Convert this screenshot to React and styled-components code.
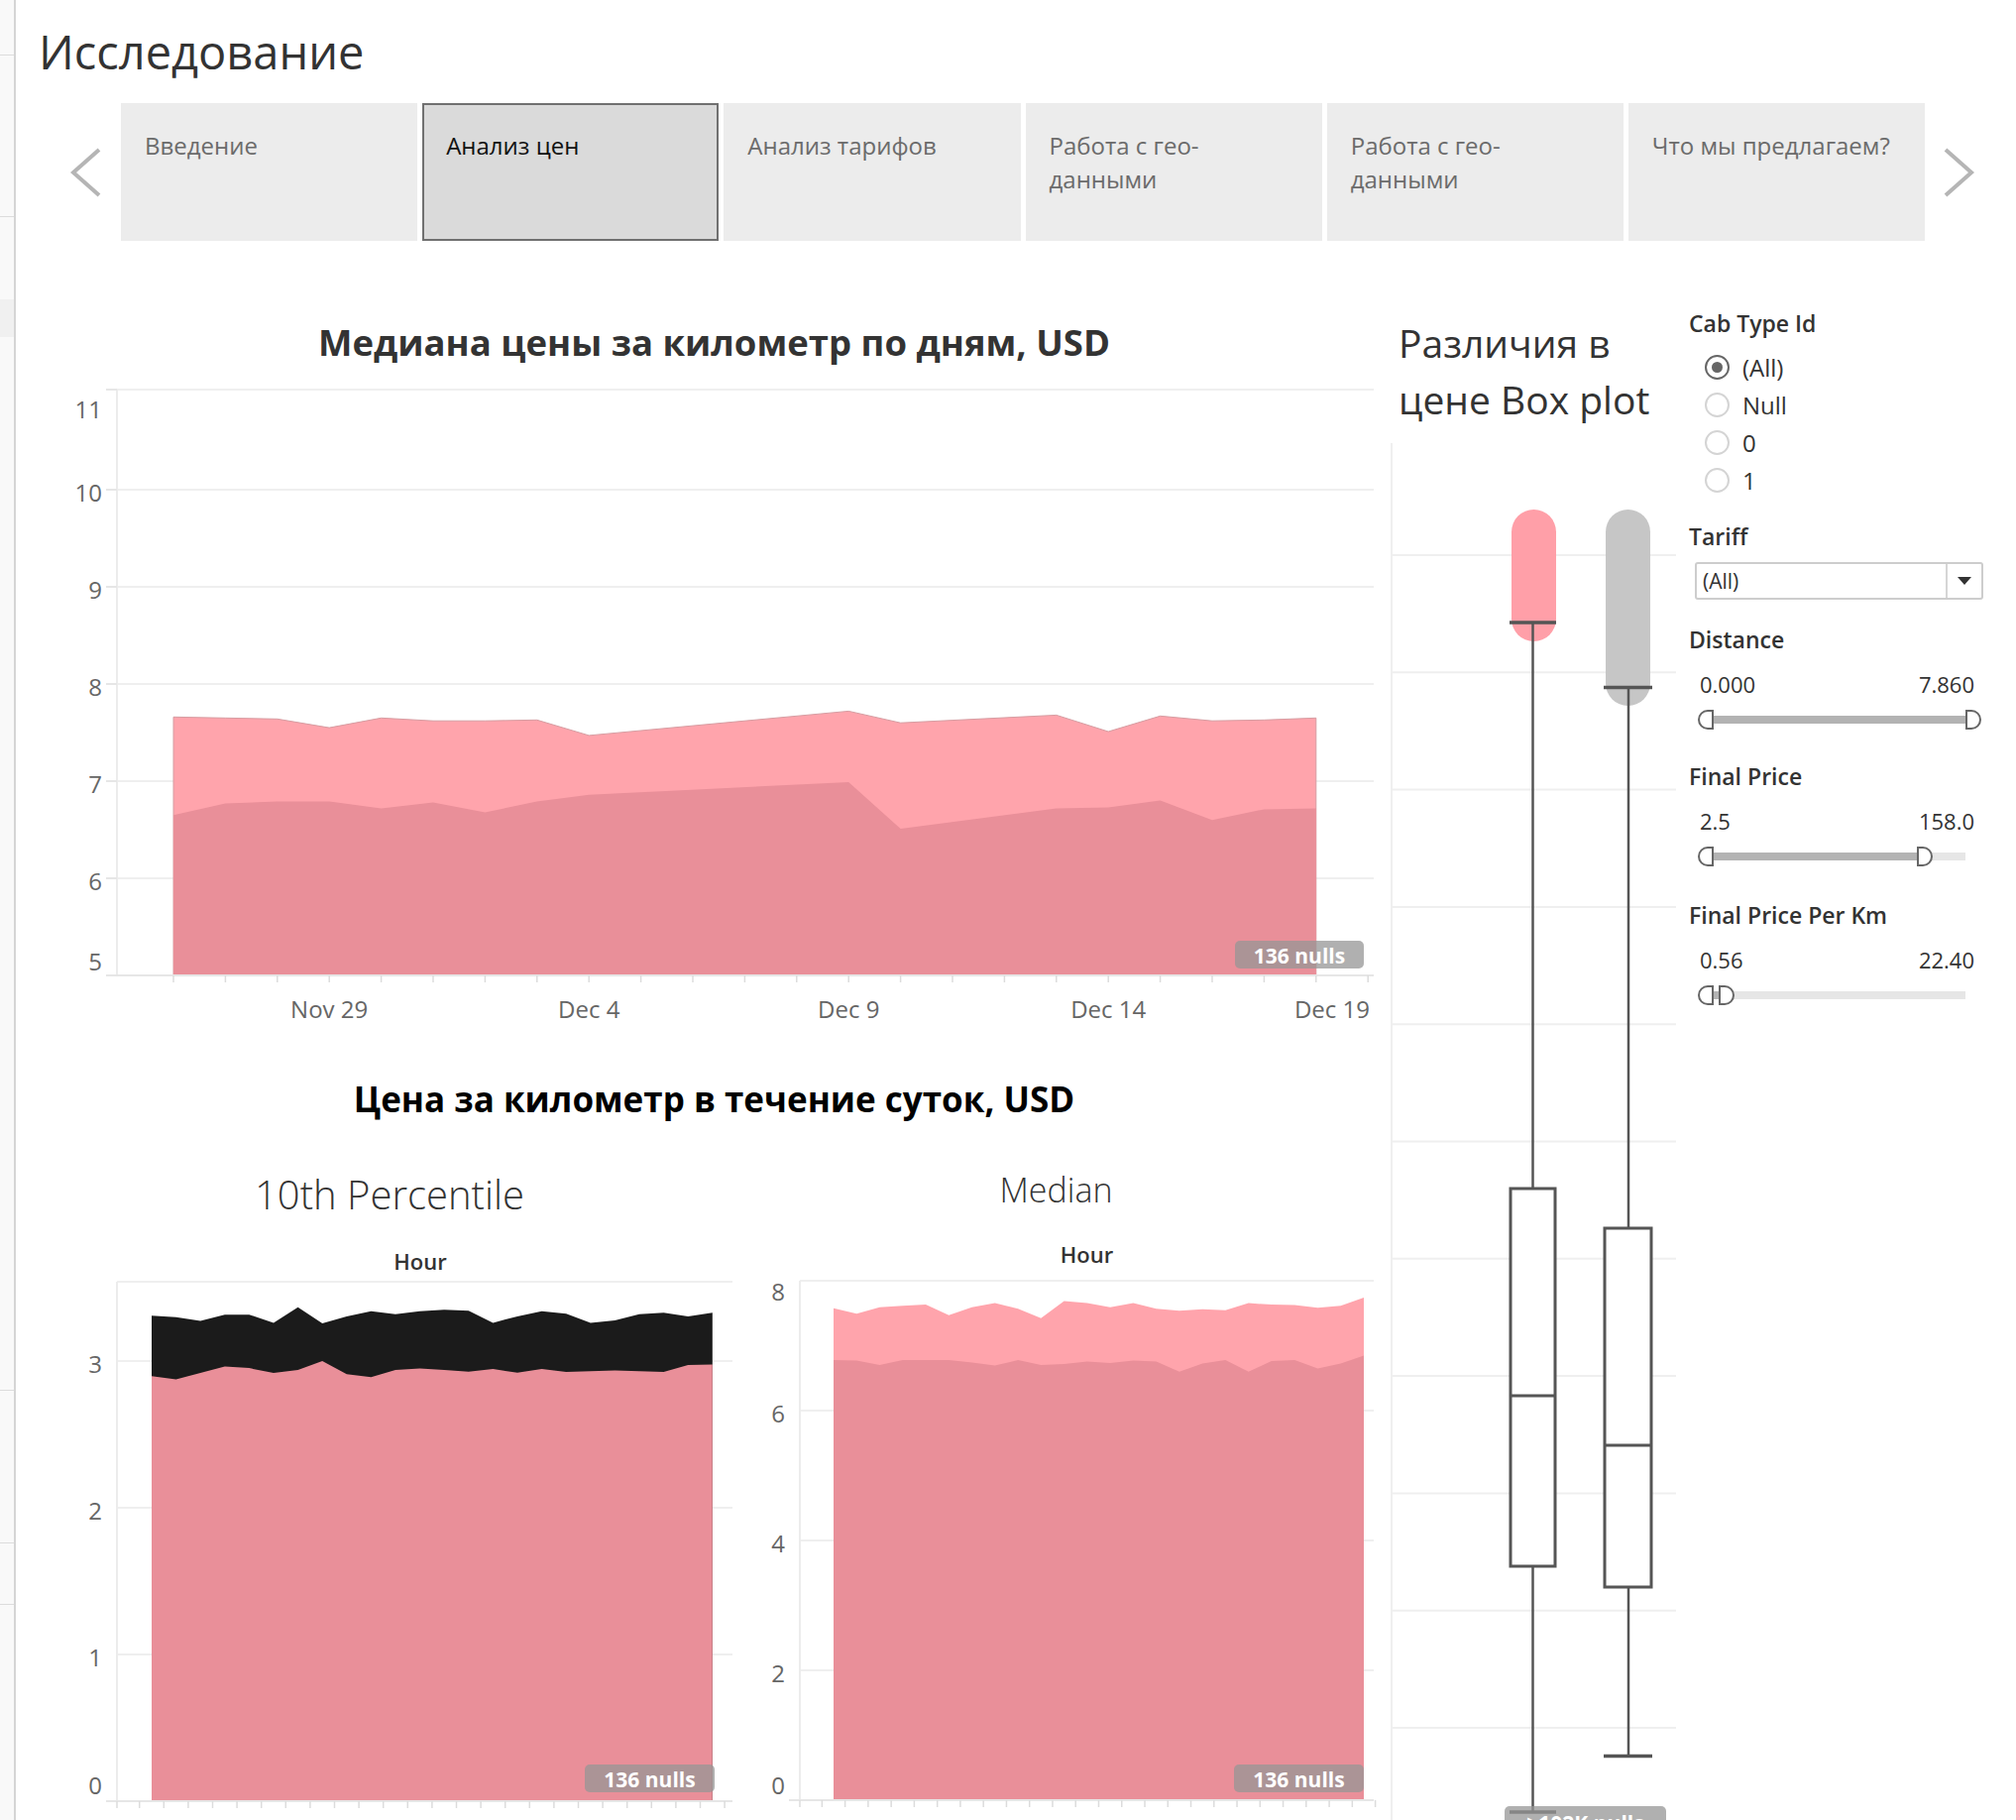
import React from "react";
import styled, { createGlobalStyle } from "styled-components";

const FONT = `"Open Sans", "Noto Sans", "Liberation Sans", sans-serif`;

const GlobalStyle = createGlobalStyle`
  html, body {
    margin: 0;
    padding: 0;
    overflow: hidden;
    background: #fff;
  }
  body {
    font-family: ${FONT};
    color: #333;
  }
  * {
    box-sizing: border-box;
  }
`;

const Page = styled.div`
  display: flex;
  width: 2034px;
  height: 1836px;
  overflow: hidden;
`;

const Sidebar = styled.div`
  width: 16px;
  flex: none;
  display: flex;
  flex-direction: column;
  background: #f9f9f9;
  border-right: 2px solid #d5d5d5;
`;

const SideCell = styled.div`
  flex: ${(p) => (p.$h ? "none" : 1)};
  height: ${(p) => (p.$h ? p.$h + "px" : "auto")};
  background: ${(p) => (p.$band ? "#f0f0f0" : "transparent")};
  border-bottom: ${(p) => (p.$line ? "1px solid #dcdcdc" : "none")};
`;

const Main = styled.div`
  flex: 1;
  min-width: 0;
  display: flex;
  flex-direction: column;
`;

const Header = styled.div`
  flex: none;
  height: 104px;
  display: flex;
  align-items: center;
  padding-left: 23px;
`;

const Title = styled.h1`
  margin: 0;
  font-size: 47px;
  font-weight: 400;
  line-height: 60px;
  color: #333;
`;

const TabBar = styled.div`
  flex: none;
  display: flex;
  height: 139px;
`;

const NavArrow = styled.div`
  width: ${(p) => p.$w}px;
  flex: none;
  display: flex;
  align-items: center;
  justify-content: ${(p) => (p.$left ? "flex-end" : "flex-start")};
  padding: ${(p) => (p.$left ? "0 18px 0 0" : "0 0 0 17px")};
`;

const TabList = styled.div`
  width: 1820px;
  display: flex;
  gap: 5px;
`;

const Tab = styled.div`
  flex: 1;
  background: ${(p) => (p.$active ? "#dadada" : "#ececec")};
  border: ${(p) => (p.$active ? "2px solid #707070" : "none")};
  padding: ${(p) => (p.$active ? "24px 28px 0 22px" : "26px 30px 0 24px")};
  font-size: 24px;
  line-height: 34px;
  color: ${(p) => (p.$active ? "#111" : "#6b6b6b")};
`;

const Content = styled.div`
  flex: none;
  display: flex;
`;

const LeftPane = styled.div`
  width: 1387px;
  flex: none;
  display: flex;
  flex-direction: column;
`;

const ChartTitle = styled.div`
  margin-top: ${(p) => p.$mt}px;
  padding-left: 22px;
  text-align: center;
  font-size: ${(p) => p.$size}px;
  font-weight: 700;
  line-height: 50px;
  color: ${(p) => p.$color};
`;

const ChartSvg = styled.svg`
  display: block;
  flex: none;
  overflow: visible;
  text {
    font-family: ${FONT};
  }
`;

const SubRow = styled.div`
  display: flex;
`;

const SubChart = styled.div`
  width: ${(p) => p.$w}px;
  flex: none;
  display: flex;
  flex-direction: column;
`;

const SubTitle = styled.div`
  margin-top: ${(p) => p.$mt}px;
  padding: ${(p) => p.$pad};
  text-align: center;
  font-size: ${(p) => p.$size}px;
  font-weight: 300;
  line-height: 50px;
  color: #333;
`;

const HourLabel = styled.div`
  margin: ${(p) => p.$m};
  padding-left: ${(p) => p.$pl}px;
  text-align: center;
  font-size: 22px;
  font-weight: 600;
  line-height: 30px;
  color: #333;
`;

const BoxPane = styled.div`
  width: 301px;
  flex: none;
  display: flex;
  flex-direction: column;
`;

const BoxTitle = styled.div`
  margin-top: 74px;
  height: 130px;
  padding-left: 8px;
  font-size: 39px;
  line-height: 57px;
  font-weight: 400;
  color: #333;
`;

const FilterPane = styled.div`
  flex: 1;
  display: flex;
  flex-direction: column;
  padding-top: 68px;
`;

const FilterLabel = styled.div`
  margin-top: ${(p) => p.$mt || 0}px;
  font-size: 23px;
  font-weight: 600;
  line-height: 30px;
  color: #333;
`;

const RadioList = styled.div`
  margin-top: 10px;
  display: flex;
  flex-direction: column;
`;

const RadioRow = styled.div`
  display: flex;
  align-items: center;
  height: 38px;
  padding-left: 16px;
  gap: 13px;
  font-size: 24px;
  color: #333;
`;

const RadioDot = styled.span`
  width: 25px;
  height: 25px;
  border-radius: 50%;
  border: 2px solid ${(p) => (p.$on ? "#666" : "#d4d4d4")};
  display: flex;
  align-items: center;
  justify-content: center;
  &::after {
    content: "";
    width: 11px;
    height: 11px;
    border-radius: 50%;
    background: ${(p) => (p.$on ? "#666" : "transparent")};
  }
`;

const Dropdown = styled.div`
  margin: 11px 0 0 6px;
  width: 291px;
  height: 38px;
  border: 2px solid #cdcdcd;
  border-radius: 3px;
  display: flex;
`;

const DropText = styled.div`
  flex: 1;
  padding-left: 6px;
  font-size: 21px;
  line-height: 34px;
  color: #333;
`;

const DropButton = styled.div`
  width: 36px;
  border-left: 2px solid #d6d6d6;
  display: flex;
  align-items: center;
  justify-content: center;
  &::after {
    content: "";
    border-left: 7px solid transparent;
    border-right: 7px solid transparent;
    border-top: 8px solid #333;
  }
`;

const RangeValues = styled.div`
  margin-top: 15px;
  width: 288px;
  padding-left: 11px;
  display: flex;
  justify-content: space-between;
  font-size: 22px;
  line-height: 30px;
  color: #333;
`;

const Slider = styled.div`
  position: relative;
  margin: 11px 0 0 25px;
  width: 254px;
  height: 20px;
  &::before {
    content: "";
    position: absolute;
    left: 0;
    right: 0;
    top: 6px;
    height: 8px;
    background: #e6e6e6;
  }
`;

const SliderFill = styled.div`
  position: absolute;
  left: 0;
  top: 6px;
  height: 8px;
  background: #b3b3b3;
`;

const Handle = styled.div`
  position: absolute;
  top: 0;
  width: 16px;
  height: 20px;
  background: #fff;
  border: 2px solid #666;
  border-radius: ${(p) => (p.$left ? "10px 0 0 10px" : "0 10px 10px 0")};
`;

// ---------- data ----------

const DAILY_TOP = [
  [0, 7.66], [1, 7.65], [2, 7.64], [3, 7.55], [4, 7.65], [5, 7.62], [6, 7.62],
  [7, 7.63], [8, 7.47], [13, 7.72], [14, 7.6], [17, 7.68], [18, 7.51],
  [19, 7.67], [20, 7.62], [21, 7.63], [22, 7.65],
];
const DAILY_LOW = [
  [0, 6.65], [1, 6.77], [2, 6.79], [3, 6.79], [4, 6.72], [5, 6.78], [6, 6.68],
  [7, 6.79], [8, 6.86], [13, 6.99], [14, 6.51], [17, 6.72], [18, 6.73],
  [19, 6.8], [20, 6.6], [21, 6.71], [22, 6.72],
];

const P10_TOP = [3.309, 3.299, 3.274, 3.316, 3.316, 3.261, 3.367, 3.257, 3.305, 3.34, 3.319, 3.34,
  3.35, 3.343, 3.261, 3.305, 3.34, 3.322, 3.261, 3.278, 3.319, 3.329, 3.305, 3.329];
const P10_LOW = [2.897, 2.876, 2.918, 2.962, 2.952, 2.918, 2.939, 3.0, 2.911, 2.89, 2.939, 2.949,
  2.939, 2.928, 2.945, 2.921, 2.945, 2.925, 2.931, 2.935, 2.931, 2.925, 2.973, 2.976];

const MED_TOP = [7.577, 7.492, 7.592, 7.615, 7.632, 7.469, 7.592, 7.655, 7.569, 7.423, 7.686, 7.655,
  7.592, 7.655, 7.569, 7.539, 7.562, 7.546, 7.655, 7.632, 7.624, 7.585, 7.615, 7.74];
const MED_LOW = [6.779, 6.771, 6.701, 6.779, 6.779, 6.779, 6.74, 6.693, 6.779, 6.701, 6.718, 6.756,
  6.733, 6.771, 6.756, 6.6, 6.725, 6.779, 6.6, 6.764, 6.779, 6.647, 6.725, 6.849];

const PINK = "#ffa4ac";
const PINK_DARK = "#e98f99";
const GRID = "#efefef";

const areaPath = (pts, base) =>
  `M${pts[0][0].toFixed(1)},${base} ` +
  pts.map(([x, y]) => `L${x.toFixed(1)},${y.toFixed(1)}`).join(" ") +
  ` L${pts[pts.length - 1][0].toFixed(1)},${base} Z`;

function NullBadge({ x, y, w, h = 28, label }) {
  return (
    <g>
      <rect x={x} y={y} width={w} height={h} rx={5} fill="rgba(150,150,150,0.75)" />
      <text
        x={x + w / 2}
        y={y + h / 2 + 1}
        textAnchor="middle"
        dominantBaseline="central"
        fontSize={21}
        fontWeight={700}
        fill="#fff"
      >
        {label}
      </text>
    </g>
  );
}

function Chevron({ left }) {
  return (
    <svg width="34" height="52" viewBox="0 0 34 52">
      <polyline
        points={left ? "30,3 4,26 30,49" : "4,3 30,26 4,49"}
        fill="none"
        stroke="#b5b5b5"
        strokeWidth="4"
      />
    </svg>
  );
}

// ---------- charts ----------

function DailyChart() {
  const x = (k) => 159 + 52.4 * k;
  const y = (v) => 320 - (v - 8) * 98;
  const base = y(5);
  const top = DAILY_TOP.map(([k, v]) => [x(k), y(v)]);
  const low = DAILY_LOW.map(([k, v]) => [x(k), y(v)]);
  const yLabels = [[11, 42], [10, y(10) + 2], [9, y(9) + 2], [8, y(8) + 2], [7, y(7) + 2], [6, y(6) + 2], [5, 599]];
  const xLabels = [["Nov 29", x(3), "middle"], ["Dec 4", x(8), "middle"], ["Dec 9", x(13), "middle"], ["Dec 14", x(18), "middle"], ["Dec 19", 1366, "end"]];
  const ticks = Array.from({ length: 24 }, (_, k) => x(k));
  return (
    <ChartSvg width={1387} height={680}>
      <line x1={102} x2={1370} y1={23} y2={23} stroke={GRID} strokeWidth={2} />
      {[10, 9, 8, 7, 6].map((v) => (
        <line key={v} x1={102} x2={1370} y1={y(v)} y2={y(v)} stroke={GRID} strokeWidth={2} />
      ))}
      <line x1={102} x2={102} y1={23} y2={base} stroke="#ececec" strokeWidth={2} />
      {yLabels.map(([v]) => (
        <line key={v} x1={91} x2={102} y1={v === 11 ? 23 : y(v)} y2={v === 11 ? 23 : y(v)} stroke="#e6e6e6" strokeWidth={2} />
      ))}
      <path d={areaPath(top, base)} fill={PINK} stroke="#d69ca1" strokeWidth={1} />
      <path d={areaPath(low, base)} fill={PINK_DARK} />
      <line x1={91} x2={1370} y1={base} y2={base} stroke="#e6e6e6" strokeWidth={2} />
      {ticks.map((tx, i) => (
        <line key={i} x1={tx} x2={tx} y1={base} y2={base + 7} stroke="#dcdcdc" strokeWidth={1.5} />
      ))}
      {yLabels.map(([v, ly]) => (
        <text key={v} x={87} y={ly} textAnchor="end" dominantBaseline="central" fontSize={24} fill="#666">
          {v}
        </text>
      ))}
      {xLabels.map(([t, lx, a]) => (
        <text key={t} x={lx} y={647} textAnchor={a} dominantBaseline="central" fontSize={24} fill="#666">
          {t}
        </text>
      ))}
      <NullBadge x={1230} y={579} w={130} label="136 nulls" />
    </ChartSvg>
  );
}

function HourlyChart({ width, axisX, plotRight, labelX, x, y, grid, topY, yLabels, layers, badgeX, half }) {
  const base = y(0);
  const ticks = Array.from({ length: 25 }, (_, h) => x(h) - half);
  const hours = Array.from({ length: 12 }, (_, i) => i * 2);
  return (
    <ChartSvg width={width} height={575}>
      <line x1={axisX} x2={plotRight} y1={topY} y2={topY} stroke={GRID} strokeWidth={2} />
      {grid.map((v) => (
        <line key={v} x1={axisX} x2={plotRight} y1={y(v)} y2={y(v)} stroke={GRID} strokeWidth={2} />
      ))}
      <line x1={axisX} x2={axisX} y1={topY} y2={base} stroke="#ececec" strokeWidth={2} />
      {layers.map((layer, i) => (
        <path key={i} d={areaPath(layer.data.map((v, h) => [x(h), y(v)]), base)} fill={layer.fill} />
      ))}
      <line x1={axisX - 11} x2={plotRight} y1={base} y2={base} stroke="#e6e6e6" strokeWidth={2} />
      <line x1={axisX} x2={axisX} y1={base} y2={base + 7} stroke="#dcdcdc" strokeWidth={1.5} />
      {ticks.map((tx, i) => (
        <line key={i} x1={tx} x2={tx} y1={base} y2={base + 7} stroke="#dcdcdc" strokeWidth={1.5} />
      ))}
      {yLabels.map(([v, ly]) => (
        <text key={v} x={labelX} y={ly} textAnchor="end" dominantBaseline="central" fontSize={24} fill="#666">
          {v}
        </text>
      ))}
      {hours.map((h) => (
        <text key={h} x={x(h)} y={558} textAnchor="middle" dominantBaseline="central" fontSize={22} fill="#666">
          {h}
        </text>
      ))}
      <NullBadge x={badgeX} y={493} w={131} label="136 nulls" />
    </ChartSvg>
  );
}

function BoxPlot() {
  const grid = Array.from({ length: 11 }, (_, i) => 113 + 118.3 * i);
  const ink = "#555";
  return (
    <ChartSvg width={301} height={1420}>
      <line x1={1} x2={1} y1={0} y2={1420} stroke={GRID} strokeWidth={2} />
      {grid.map((gy, i) => (
        <line key={i} x1={0} x2={288} y1={gy} y2={gy} stroke={GRID} strokeWidth={2} />
      ))}
      <rect x={122} y={67} width={45} height={133} rx={22.5} fill="#ff9fa8" />
      <rect x={217} y={67} width={45} height={198} rx={22.5} fill="#c6c6c6" />

      <line x1={143.5} x2={143.5} y1={181} y2={1381} stroke={ink} strokeWidth={2.5} />
      <line x1={120} x2={167} y1={181} y2={181} stroke={ink} strokeWidth={3.5} />
      <rect x={121} y={752} width={45} height={381} fill="#fff" stroke={ink} strokeWidth={3} />
      <line x1={121} x2={166} y1={961} y2={961} stroke={ink} strokeWidth={3} />
      <line x1={120} x2={167} y1={1381} y2={1381} stroke={ink} strokeWidth={3.5} />

      <line x1={240} x2={240} y1={246.5} y2={1324.5} stroke={ink} strokeWidth={2.5} />
      <line x1={215} x2={264} y1={246.5} y2={246.5} stroke={ink} strokeWidth={3.5} />
      <rect x={216} y={792} width={47} height={362} fill="#fff" stroke={ink} strokeWidth={3} />
      <line x1={216} x2={263} y1={1011} y2={1011} stroke={ink} strokeWidth={3} />
      <line x1={215} x2={264} y1={1324.5} y2={1324.5} stroke={ink} strokeWidth={3.5} />

      <NullBadge x={115} y={1375} w={163} h={32} label=">102K nulls" />
    </ChartSvg>
  );
}

function RangeFilter({ label, mt, min, max, fill }) {
  return (
    <>
      <FilterLabel $mt={mt}>{label}</FilterLabel>
      <RangeValues>
        <span>{min}</span>
        <span>{max}</span>
      </RangeValues>
      <Slider>
        <SliderFill style={{ width: fill }} />
        <Handle $left style={{ left: -16 }} />
        <Handle style={{ left: fill }} />
      </Slider>
    </>
  );
}

const TABS = [
  "Введение",
  "Анализ цен",
  "Анализ тарифов",
  "Работа с гео-данными",
  "Работа с гео-данными",
  "Что мы предлагаем?",
];

export default function App() {
  return (
    <Page>
      <GlobalStyle />
      <Sidebar>
        <SideCell $h={56} $line />
        <SideCell $h={163} $line />
        <SideCell $h={83} />
        <SideCell $h={38} $band />
        <SideCell $h={1063} $line />
        <SideCell $h={154} $line />
        <SideCell $h={62} $line />
        <SideCell />
      </Sidebar>
      <Main>
        <Header>
          <Title>Исследование</Title>
        </Header>
        <TabBar>
          <NavArrow $w={106} $left>
            <Chevron left />
          </NavArrow>
          <TabList>
            {TABS.map((t, i) => (
              <Tab key={i} $active={i === 1}>
                {t}
              </Tab>
            ))}
          </TabList>
          <NavArrow $w={92}>
            <Chevron />
          </NavArrow>
        </TabBar>
        <Content>
          <LeftPane>
            <ChartTitle $mt={77} $size={36.5} $color="#333">
              Медиана цены за километр по дням, USD
            </ChartTitle>
            <DailyChart />
            <ChartTitle $mt={34} $size={35} $color="#000">
              Цена за километр в течение суток, USD
            </ChartTitle>
            <SubRow>
              <SubChart $w={745}>
                <SubTitle $mt={46} $size={40} $pad="0 0 0 9px">
                  10th Percentile
                </SubTitle>
                <HourLabel $m="27px 0 0 0" $pl={71}>
                  Hour
                </HourLabel>
                <HourlyChart
                  width={745}
                  axisX={102}
                  plotRight={723}
                  labelX={87}
                  x={(h) => 137 + 24.6 * h}
                  y={(v) => 86 - (v - 3) * 148}
                  half={12.3}
                  grid={[3, 2, 1]}
                  topY={6}
                  yLabels={[[3, 88], [2, 236], [1, 384], [0, 513]]}
                  layers={[
                    { data: P10_TOP, fill: "#1b1b1b" },
                    { data: P10_LOW, fill: PINK_DARK },
                  ]}
                  badgeX={574}
                />
              </SubChart>
              <SubChart $w={642}>
                <SubTitle $mt={41} $size={34} $pad="0 33px 0 0">
                  Median
                </SubTitle>
                <HourLabel $m="25px 0 7px 0" $pl={29}>
                  Hour
                </HourLabel>
                <HourlyChart
                  width={642}
                  axisX={46}
                  plotRight={625}
                  labelX={31}
                  x={(h) => 80 + 23.26 * h}
                  y={(v) => 136 - (v - 6) * 65.5}
                  half={11.63}
                  grid={[6, 4, 2]}
                  topY={5}
                  yLabels={[[8, 15], [6, 138], [4, 269], [2, 400], [0, 513]]}
                  layers={[
                    { data: MED_TOP, fill: PINK },
                    { data: MED_LOW, fill: PINK_DARK },
                  ]}
                  badgeX={484}
                />
              </SubChart>
            </SubRow>
          </LeftPane>
          <BoxPane>
            <BoxTitle>
              Различия в
              <br />
              цене Box plot
            </BoxTitle>
            <BoxPlot />
          </BoxPane>
          <FilterPane>
            <FilterLabel>Cab Type Id</FilterLabel>
            <RadioList>
              {["(All)", "Null", "0", "1"].map((r, i) => (
                <RadioRow key={r}>
                  <RadioDot $on={i === 0} />
                  {r}
                </RadioRow>
              ))}
            </RadioList>
            <FilterLabel $mt={23}>Tariff</FilterLabel>
            <Dropdown>
              <DropText>(All)</DropText>
              <DropButton />
            </Dropdown>
            <RangeFilter label="Distance" mt={25} min="0.000" max="7.860" fill={254} />
            <RangeFilter label="Final Price" mt={32} min="2.5" max="158.0" fill={205} />
            <RangeFilter label="Final Price Per Km" mt={34} min="0.56" max="22.40" fill={5} />
          </FilterPane>
        </Content>
      </Main>
    </Page>
  );
}
